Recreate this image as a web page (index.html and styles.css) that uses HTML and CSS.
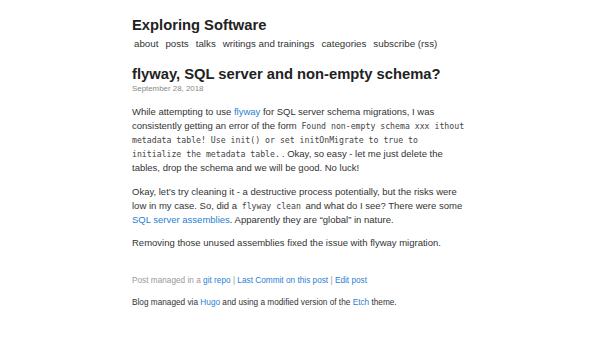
FILE: index.html
```html
<!DOCTYPE html>
<html>
<head>
<meta charset="utf-8">
<link rel="stylesheet" href="styles.css">
</head>
<body>
<div class="page">
  <header class="site-header">
    <h1 class="site-title">Exploring Software</h1>
    <nav class="nav">
      <a href="#">about</a>
      <a href="#">posts</a>
      <a href="#">talks</a>
      <a href="#">writings and trainings</a>
      <a href="#">categories</a>
      <a href="#">subscribe (rss)</a>
    </nav>
  </header>
  <article class="post">
    <h2 class="post-title">flyway, SQL server and non-empty schema?</h2>
    <div class="post-date">September 28, 2018</div>
    <div class="post-body">
      <p>While attempting to use <a class="link" href="#">flyway</a> for SQL server schema migrations, I was consistently getting an error of the form <code>Found non-empty schema xxx ithout metadata table! Use init() or set initOnMigrate to true to initialize the metadata table.</code>. Okay, so easy - let me just delete the tables, drop the schema and we will be good. No luck!</p>
      <p>Okay, let’s try cleaning it - a destructive process potentially, but the risks were low in my case. So, did a <code>flyway clean</code> and what do I see? There were some <a class="link" href="#">SQL server assemblies</a>. Apparently they are “global” in nature.</p>
      <p>Removing those unused assemblies fixed the issue with flyway migration.</p>
    </div>
  </article>
  <footer class="footer">
    <p class="managed">Post managed in a <a class="link" href="#">git repo</a> | <a class="link" href="#">Last Commit on this post</a> | <a class="link" href="#">Edit post</a></p>
    <p class="credits">Blog managed via <a class="link" href="#">Hugo</a> and using a modified version of the <a class="link" href="#">Etch</a> theme.</p>
  </footer>
</div>
</body>
</html>
```
FILE: styles.css
```css
html, body {
  margin: 0;
  padding: 0;
  background: #fff;
}
body {
  font-family: "Liberation Sans", Arial, sans-serif;
  font-size: 9.5px;
  line-height: 14px;
  color: #333;
}
.page {
  width: 336px;
  margin: 0 auto;
  padding: 16px 0 0 0;
}
.site-title {
  margin: 0;
  font-size: 14.75px;
  line-height: 18px;
  font-weight: bold;
  color: #222;
}
.nav {
  display: flex;
  gap: 7px;
  margin-top: 3px;
  padding-left: 2px;
  font-size: 9.75px;
  line-height: 14px;
}
.nav a {
  color: #333;
  text-decoration: none;
}
.post {
  margin-top: 14px;
}
.post-title {
  margin: 0;
  font-size: 14.75px;
  line-height: 18px;
  font-weight: bold;
  color: #222;
}
.post-date {
  margin-top: 1px;
  font-size: 7.9px;
  line-height: 10px;
  color: #888;
}
.post-body {
  margin-top: 11px;
}
.post-body p {
  margin: 0 0 9.5px 0;
}
code {
  font-family: "DejaVu Sans Mono", monospace;
  font-size: 8.2px;
  color: #444;
  padding: 0 2px;
}
.link {
  color: #2a7fd4;
  text-decoration: none;
}
.footer {
  margin-top: 25px;
  font-size: 8.25px;
  line-height: 12px;
}
.footer p {
  margin: 0 0 10px 0;
}
.managed {
  color: #999;
}
.credits {
  color: #333;
}
```
